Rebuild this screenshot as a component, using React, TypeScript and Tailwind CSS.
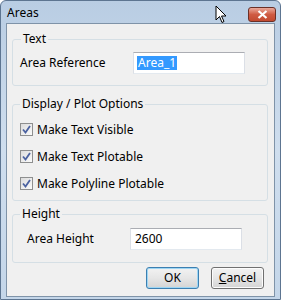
import { useState } from 'react'

function Check({ label }: { label: string }) {
  return (
    <label className="flex items-center h-[27px] pl-[7px]">
      <span className="w-[13px] h-[13px] border border-[#8e8f8f] bg-gradient-to-br from-[#dcdcdc] to-[#fbfbfb] flex items-center justify-center">
        <svg width="9" height="9" viewBox="0 0 9 9">
          <path d="M1 4.5 L3.5 7.5 L8 1" fill="none" stroke="#4b62a0" strokeWidth="1.8" />
        </svg>
      </span>
      <span className="ml-[4px]">{label}</span>
    </label>
  )
}

export default function App() {
  const [ref] = useState('Area_1')
  const [height] = useState('2600')

  return (
    <div
      className="relative w-[281px] h-[300px] bg-gradient-to-b from-[#b9cde3] via-[#cfdeee] to-[#c4d6e9] border border-[#5d7591] rounded-t-[6px] flex flex-col text-[12px] text-black"
      style={{ fontFamily: '"Noto Sans", sans-serif' }}
    >
      {/* title bar */}
      <div className="h-[21px] flex items-center pl-[6px] pr-[4px]">
        <span className="text-[12px] leading-none mt-[2px]">Areas</span>
        <div className="ml-auto mt-[5px] w-[28px] h-[15px] rounded-[3px] border border-[#6b3027] bg-gradient-to-b from-[#e9a99b] via-[#cf5b43] to-[#c24a30] flex items-center justify-center">
          <svg width="11" height="9" viewBox="0 0 11 9">
            <path d="M1.5 1 L9.5 8 M9.5 1 L1.5 8" stroke="#fff" strokeWidth="2.2" />
          </svg>
        </div>
      </div>

      {/* cursor */}
      <svg className="absolute left-[214px] top-[4px]" width="14" height="20" viewBox="0 0 14 20">
        <path d="M1 1 L1 15 L4.5 11.5 L7 17.5 L9 16.5 L6.5 11 L11 11 Z" fill="#fff" stroke="#000" strokeWidth="1" strokeLinejoin="round" />
      </svg>

      {/* client */}
      <div className="flex-1 mx-[5px] mb-[2px] mt-[1px] border border-[#7f93a8] bg-[#f0f0f0] px-[5px] pt-[7px] flex flex-col">
        <fieldset className="border border-[#d5dfe5] rounded-[3px] pl-[7px] pr-[6px] pb-[11px] mr-[1px]">
          <legend className="px-[2px] ml-[1px] leading-[16px]">Text</legend>
          <div className="flex items-center mt-[5px]">
            <span className="w-[113px]">Area Reference</span>
            <div className="w-[112px] h-[22px] border border-[#abadb3] border-b-[#e3e9ef] border-x-[#dbdfe6] bg-white flex items-center pl-[3px]">
              <span className="bg-[#3399ff] text-white leading-[14px] px-[1px]">{ref}</span>
            </div>
          </div>
        </fieldset>

        <fieldset className="border border-[#d5dfe5] rounded-[3px] mt-[10px] pb-[3px] mr-[1px]">
          <legend className="px-[2px] ml-[7px] leading-[16px]">Display / Plot Options</legend>
          <div className="mt-[4px]">
            <Check label="Make Text Visible" />
            <Check label="Make Text Plotable" />
            <Check label="Make Polyline Plotable" />
          </div>
        </fieldset>

        <fieldset className="border border-[#d5dfe5] rounded-[3px] mt-[5px] pl-[14px] pb-[12px] mr-[1px]">
          <legend className="px-[2px] ml-[-7px] leading-[16px]">Height</legend>
          <div className="flex items-center mt-[6px]">
            <span className="w-[103px]">Area Height</span>
            <div className="w-[112px] h-[22px] border border-[#abadb3] border-b-[#e3e9ef] border-x-[#dbdfe6] bg-white flex items-center pl-[4px]">
              {height}
            </div>
          </div>
        </fieldset>

        <div className="flex justify-end gap-[12px] mt-[4px] pr-[5px]">
          <button className="w-[53px] h-[22px] rounded-[3px] border border-[#3c7fb1] bg-gradient-to-b from-[#f2f2f2] via-[#e6e6e6] to-[#d4d4d4] shadow-[inset_0_0_0_1px_#9ed6f4]">
            OK
          </button>
          <button className="w-[53px] h-[22px] rounded-[3px] border border-[#707070] bg-gradient-to-b from-[#f2f2f2] via-[#e6e6e6] to-[#d4d4d4] shadow-[inset_0_0_0_1px_#fcfcfc]">
            <span className="underline">C</span>ancel
          </button>
        </div>
      </div>
    </div>
  )
}
